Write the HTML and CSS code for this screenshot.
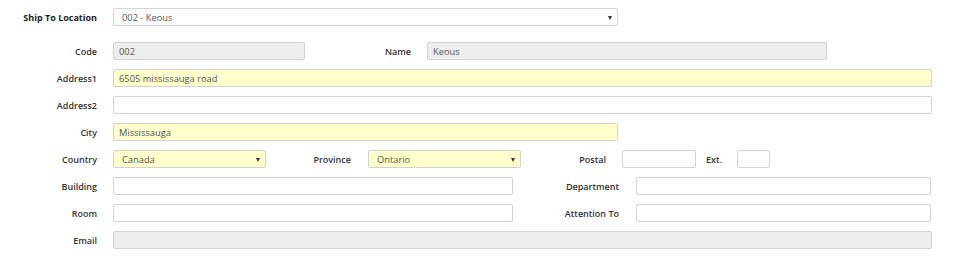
FILE: index.html
```html
<!DOCTYPE html>
<html lang="en">
<head>
    <meta charset="UTF-8">
    <title>Ship To Location</title>
    <link rel="stylesheet" href="styles.css">
</head>
<body>
    <div class="form">
        <div class="row ship-row">
            <label class="lbl lbl-main lbl-ship">Ship To Location</label>
            <div class="field select w-city">002 - Keous<span class="arrow"></span></div>
        </div>
        <div class="row">
            <label class="lbl lbl-main">Code</label>
            <div class="field disabled w-code">002</div>
            <label class="lbl lbl-name">Name</label>
            <div class="field disabled w-name">Keous</div>
        </div>
        <div class="row">
            <label class="lbl lbl-main">Address1</label>
            <div class="field required w-full">6505 mississauga road</div>
        </div>
        <div class="row">
            <label class="lbl lbl-main">Address2</label>
            <div class="field w-full"></div>
        </div>
        <div class="row">
            <label class="lbl lbl-main">City</label>
            <div class="field required w-city">Mississauga</div>
        </div>
        <div class="row">
            <label class="lbl lbl-main">Country</label>
            <div class="field select required w-small">Canada<span class="arrow"></span></div>
            <label class="lbl lbl-prov">Province</label>
            <div class="field select required w-small">Ontario<span class="arrow"></span></div>
            <label class="lbl lbl-postal">Postal</label>
            <div class="field w-postal"></div>
            <label class="lbl lbl-ext">Ext.</label>
            <div class="field w-ext"></div>
        </div>
        <div class="row">
            <label class="lbl lbl-main">Building</label>
            <div class="field w-half"></div>
            <label class="lbl lbl-dept">Department</label>
            <div class="field w-right"></div>
        </div>
        <div class="row">
            <label class="lbl lbl-main">Room</label>
            <div class="field w-half"></div>
            <label class="lbl lbl-dept">Attention To</label>
            <div class="field w-right"></div>
        </div>
        <div class="row">
            <label class="lbl lbl-main">Email</label>
            <div class="field disabled w-full"></div>
        </div>
    </div>
</body>
</html>
```

FILE: styles.css
```css
body {
    margin: 0;
    font-family: "Open Sans", Arial, sans-serif;
    font-size: 9px;
    color: #333;
    background: #fff;
}
.form {
    padding-top: 8px;
}
.row {
    display: flex;
    align-items: center;
    height: 18px;
    margin-bottom: 9px;
}
.ship-row {
    margin-bottom: 16px;
}
.lbl {
    flex: none;
    text-align: right;
    font-weight: 600;
    color: #333;
    margin-right: 16px;
}
.lbl-main { width: 97px; }
.lbl-ship { font-weight: 700; color: #222; }
.lbl-name { width: 106px; }
.lbl-prov { width: 85px; margin-right: 17px; }
.lbl-postal { width: 85px; }
.lbl-ext { width: 26px; margin-right: 15px; }
.lbl-dept { width: 106px; margin-right: 17px; }

.field {
    flex: none;
    box-sizing: border-box;
    height: 18px;
    line-height: 17px;
    padding: 0 5px;
    border: 1px solid #d2d2d2;
    border-radius: 2px;
    background: #fff;
    color: #555;
    font-size: 9.3px;
    position: relative;
}
.field.disabled { background: #eee; }
.field.required { background: #ffffcc; }
.select { padding-left: 8px; }
.arrow {
    position: absolute;
    right: 5px;
    top: 7px;
    border-left: 2px solid transparent;
    border-right: 2px solid transparent;
    border-top: 4px solid #333;
}
.w-full { width: 819px; }
.w-city { width: 505px; }
.w-code { width: 192px; }
.w-name { width: 400px; }
.w-small { width: 153px; }
.w-postal { width: 74px; }
.w-ext { width: 33px; }
.w-half { width: 400px; }
.w-right { width: 295px; }
```
